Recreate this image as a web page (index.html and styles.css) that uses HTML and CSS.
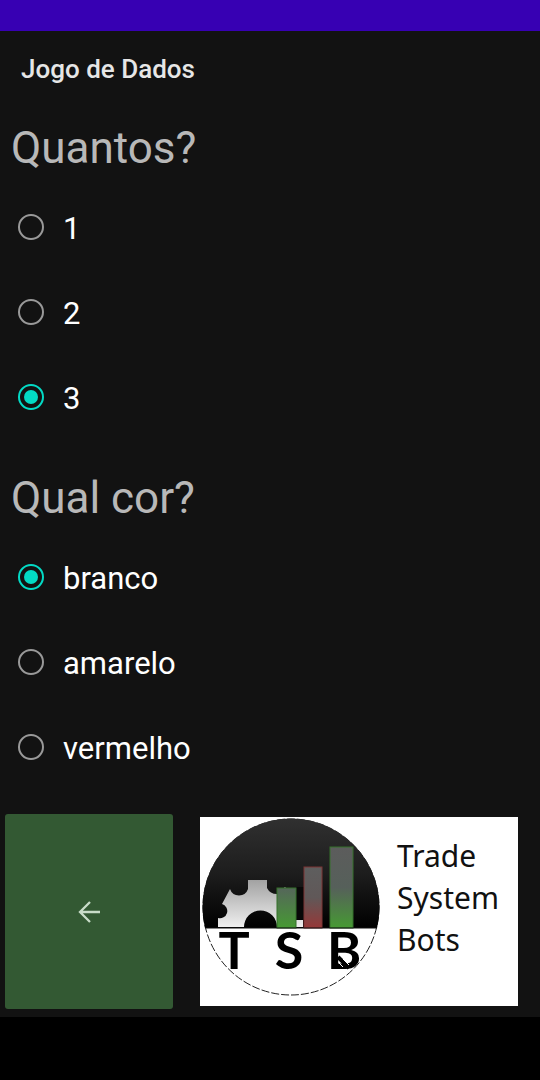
FILE: index.html
```html
<!DOCTYPE html>
<html lang="pt-BR">
<head>
  <meta charset="UTF-8">
  <meta name="viewport" content="width=device-width, initial-scale=1">
  <title>Jogo de Dados</title>
  <link rel="stylesheet" href="styles.css">
</head>
<body>
  <div class="status-bar"></div>

  <header class="toolbar">
    <h1>Jogo de Dados</h1>
  </header>

  <main>
    <form class="options">
      <!-- Quantidade de dados -->
      <fieldset>
        <legend>Quantos?</legend>
        <label class="option"><input type="radio" name="quantidade" value="1"><span>1</span></label>
        <label class="option"><input type="radio" name="quantidade" value="2"><span>2</span></label>
        <label class="option"><input type="radio" name="quantidade" value="3" checked><span>3</span></label>
      </fieldset>

      <!-- Cor dos dados -->
      <fieldset>
        <legend>Qual cor?</legend>
        <label class="option"><input type="radio" name="cor" value="branco" checked><span>branco</span></label>
        <label class="option"><input type="radio" name="cor" value="amarelo"><span>amarelo</span></label>
        <label class="option"><input type="radio" name="cor" value="vermelho"><span>vermelho</span></label>
      </fieldset>
    </form>

    <div class="bottom">
      <button type="button" class="back" aria-label="Voltar">
        <svg viewBox="0 0 24 24" width="24" height="24">
          <path d="M23 12H3M13 2L3 12L13 22" fill="none" stroke="currentColor" stroke-width="2.300"/>
        </svg>
      </button>

      <div class="brand">
        <svg class="logo" viewBox="0 0 182 189">
          <defs>
            <linearGradient id="sky" x1="0" y1="0" x2="0" y2="1">
              <stop offset="0" stop-color="#303030"/>
              <stop offset="0.5" stop-color="#1d1d1d"/>
              <stop offset="1" stop-color="#000"/>
            </linearGradient>
            <linearGradient id="steel" x1="0" y1="0" x2="0" y2="1">
              <stop offset="0" stop-color="#a2a2a2"/>
              <stop offset="1" stop-color="#efefef"/>
            </linearGradient>
            <linearGradient id="green" x1="0" y1="0" x2="0" y2="1">
              <stop offset="0" stop-color="#5c5c5c"/>
              <stop offset="0.5" stop-color="#56605a"/>
              <stop offset="1" stop-color="#469a33"/>
            </linearGradient>
            <linearGradient id="green-short" x1="0" y1="0" x2="0" y2="1">
              <stop offset="0" stop-color="#55665a"/>
              <stop offset="1" stop-color="#469a33"/>
            </linearGradient>
            <linearGradient id="red" x1="0" y1="0" x2="0" y2="1">
              <stop offset="0" stop-color="#5e5e5e"/>
              <stop offset="0.5" stop-color="#605858"/>
              <stop offset="1" stop-color="#963838"/>
            </linearGradient>
          </defs>
          <circle cx="91" cy="90" r="88" fill="#fff" stroke="#222" stroke-width="1" stroke-dasharray="8 2"/>
          <path d="M5 111A88.500 88.500 0 1 1 177 111Z" fill="url(#sky)"/>
          <!-- engrenagem -->
          <path d="M18 110V101A7 7 0 1 0 22 87L30 72A9.500 9.500 0 0 0 48 72V63H67V71Q70 77 77 77L85 70L97 82L95 103H103V110H77A16.500 16.500 0 1 0 44 110Z" fill="url(#steel)"/>
          <path d="M96 70H104V102H96Z" fill="#080808"/>
          <!-- barras -->
          <rect x="77" y="71" width="19" height="40" fill="url(#green-short)" stroke="#35702b" stroke-width="1"/>
          <rect x="104" y="50" width="18" height="61" fill="url(#red)" stroke="#7c3434" stroke-width="1"/>
          <rect x="130" y="30" width="23" height="81" fill="url(#green)" stroke="#35702b" stroke-width="1"/>
          <path d="M5 111H177" stroke="#111" stroke-width="1"/>
          <g class="initials">
            <text x="34" y="152">T</text>
            <text x="89" y="152">S</text>
            <text x="144" y="152">B</text>
          </g>
          <path d="M138 140L149 151" fill="none" stroke="#000" stroke-width="4"/>
          <path d="M139 146L143 150M143 142L149 148" stroke="#fff" stroke-width="1"/>
        </svg>
        <p class="brand-name">Trade<br>System<br>Bots</p>
      </div>
    </div>
  </main>

  <div class="nav-bar"></div>
</body>
</html>
```
FILE: styles.css
```css
/* Variáveis de cores */
:root {
  --primary-dark: #3700b3;
  --accent: #03dac5;
  --background: #121212;
  --button-color: #335933;
}
/* Estilos gerais */
* {
  box-sizing: border-box;
}
body {
  margin: 0;
  min-height: 100vh;
  display: flex;
  flex-direction: column;
  font-family: Roboto, sans-serif;
  background: var(--background);
  color: #fff;
}
main {
  flex: 1;
}
/* Barras do sistema */
.status-bar {
  height: 31px;
  background: var(--primary-dark);
}
.nav-bar {
  height: 63px;
  background: #000;
}
.toolbar {
  height: 76px;
  padding: 0 21px;
  display: flex;
  align-items: center;
}
.toolbar h1 {
  margin: 0;
  font-size: 26px;
  font-weight: 500;
  color: #e6e6e6;
}
/* Opções */
.options {
  padding: 15px 11px 0;
  display: flex;
  flex-direction: column;
  gap: 33px;
}
fieldset {
  margin: 0;
  padding: 0;
  border: none;
}
legend {
  padding: 0;
  margin-bottom: 9px;
  font-size: 44px;
  line-height: 53px;
  color: #b8b8b8;
}
.option {
  min-height: 85px;
  padding-left: 7px;
  display: flex;
  align-items: center;
  gap: 19px;
  font-size: 31px;
  line-height: 40px;
}
.option span {
  padding-top: 4px;
}
.option input {
  appearance: none;
  width: 26px;
  height: 26px;
  margin: 0;
  border: 2px solid #999;
  border-radius: 50%;
}
.option input:checked {
  border-color: var(--accent);
  padding: 4px;
  background: var(--accent) content-box;
}
/* Rodapé com botão e marca */
.bottom {
  padding: 25px 22px 8px 5px;
  display: grid;
  grid-template-columns: 168fr 318fr;
  gap: 27px;
  align-items: center;
}
.back {
  height: 195px;
  padding: 0;
  display: flex;
  align-items: center;
  justify-content: center;
  border: none;
  border-radius: 3px;
  background: var(--button-color);
  color: #c8dcc8;
  cursor: pointer;
}
.brand {
  display: grid;
  grid-template-columns: 182fr 136fr;
  background: #fff;
  color: #111;
}
.logo {
  display: block;
  width: 100%;
}
.initials {
  font-family: Lato, sans-serif;
  font-size: 52px;
  font-weight: 700;
  text-anchor: middle;
}
.brand-name {
  margin: 0;
  padding: 18px 0 0 15px;
  font-family: "Noto Sans", sans-serif;
  font-size: 30px;
  line-height: 42px;
}
```
